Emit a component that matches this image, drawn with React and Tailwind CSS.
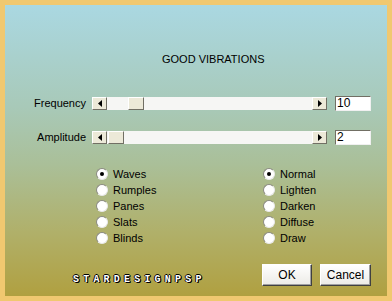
const font = { fontFamily: '"Liberation Sans", Arial, sans-serif' }

function Arrow({ dir }) {
  return (
    <div className="w-[15px] h-[13px] bg-[#ece9d8] border border-t-white border-l-white border-r-[#716f64] border-b-[#716f64] flex items-center justify-center">
      <svg width="4" height="7" viewBox="0 0 4 7">
        {dir === 'left' ? <path d="M4 0 L0 3.5 L4 7 Z" fill="#000" /> : <path d="M0 0 L4 3.5 L0 7 Z" fill="#000" />}
      </svg>
    </div>
  )
}

function Slider({ label, value, thumb }) {
  return (
    <div className="flex items-center h-[15px]">
      <span className="w-[81px] text-right text-[11px] leading-[13px] text-black">{label}</span>
      <div className="ml-[6px] w-[235px] h-[13px] flex bg-[#f4f4f4]">
        <Arrow dir="left" />
        <div className="flex-1 relative bg-[#f6f6f4]">
          <div
            className="absolute top-0 h-[13px] w-[16px] bg-[#ece9d8] border border-t-white border-l-white border-r-[#716f64] border-b-[#716f64]"
            style={{ left: thumb }}
          />
        </div>
        <Arrow dir="right" />
      </div>
      <div className="ml-[8px] w-[36px] h-[15px] bg-white border border-t-[#716f64] border-l-[#716f64] border-r-[#f0f0f0] border-b-[#f0f0f0] text-[12px] leading-[13px] pl-[1px] text-black">
        {value}
      </div>
    </div>
  )
}

function Radio({ label, checked }) {
  return (
    <div className="flex items-center h-[16px]">
      <div className="w-[12px] h-[12px] rounded-full bg-white border border-t-[#8a8a80] border-l-[#8a8a80] border-r-[#e8e8e8] border-b-[#e8e8e8] flex items-center justify-center">
        {checked && <div className="w-[4px] h-[4px] rounded-full bg-black" />}
      </div>
      <span className="ml-[5px] text-[11px] leading-[13px] text-black">{label}</span>
    </div>
  )
}

function Button({ children, w }) {
  return (
    <button
      type="button"
      className={`${w} h-[22px] bg-gradient-to-b from-white to-[#ecebe6] border border-t-white border-l-white border-r-[#404040] border-b-[#404040] shadow-[inset_-1px_-1px_0_#a0a0a0] text-[12px] text-black`}
    >
      {children}
    </button>
  )
}

export default function App() {
  return (
    <div className="w-[392px] h-[301px] bg-[#f0c870] p-[5px]" style={font}>
      <div className="w-full h-full flex flex-col bg-[linear-gradient(to_bottom,#aad8e2_0%,#a8c9b8_35%,#aabf98_55%,#b0b06a_78%,#b0a040_100%)]">
        <div className="pt-[48px] h-[61px] pl-[157px] text-[11px] leading-[13px] text-black">GOOD VIBRATIONS</div>

        <div className="mt-[30px]">
          <Slider label="Frequency" value="10" thumb={21} />
        </div>
        <div className="mt-[19px]">
          <Slider label="Amplitude" value="2" thumb={1} />
        </div>

        <div className="mt-[21px] pl-[91px] grid grid-cols-[167px_1fr]">
          <div className="flex flex-col">
            <Radio label="Waves" checked />
            <Radio label="Rumples" />
            <Radio label="Panes" />
            <Radio label="Slats" />
            <Radio label="Blinds" />
          </div>
          <div className="flex flex-col">
            <Radio label="Normal" checked />
            <Radio label="Lighten" />
            <Radio label="Darken" />
            <Radio label="Diffuse" />
            <Radio label="Draw" />
          </div>
        </div>

        <div className="mt-[18px] flex items-center pl-[68px] pr-[16px]">
          <span
            className="mt-[9px] text-[10px] leading-[10px] font-bold tracking-[4.2px] text-white"
            style={{ fontFamily: '"Liberation Mono", monospace', textShadow: '1px 1px 0 #000, -1px 0 0 #000, 0 -1px 0 #000, 1px 0 0 #000' }}
          >
            STARDESIGNPSP
          </span>
          <div className="ml-auto flex gap-[8px]">
            <Button w="w-[50px]">OK</Button>
            <Button w="w-[51px]">Cancel</Button>
          </div>
        </div>
      </div>
    </div>
  )
}
